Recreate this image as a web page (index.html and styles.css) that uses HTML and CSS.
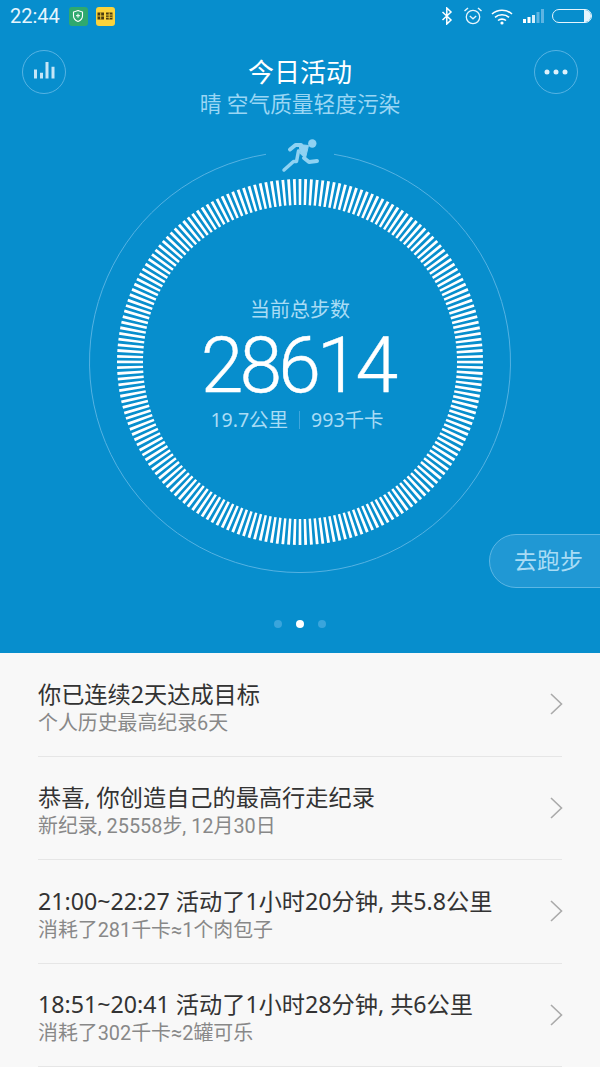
FILE: index.html
```html
<!DOCTYPE html>
<html lang="zh">
<head>
<meta charset="utf-8">
<title>今日活动</title>
<link rel="stylesheet" href="styles.css">
</head>
<body>
<main class="screen">
  <section class="hero">
    <div class="status">
      <div class="status-left">
        <span class="time">22:44</span>
        <span class="app-icon app-green">
          <svg viewBox="0 0 18 18" width="18" height="18"><path d="M9 3.500l4.500 1.600v3.600c0 2.800-1.900 4.700-4.500 5.800-2.600-1.100-4.500-3-4.500-5.800V5.100z" fill="none" stroke="#fff" stroke-width="1.100"/><path d="M9 6.700v4M7 8.700h4" stroke="#fff" stroke-width="1"/></svg>
        </span>
        <span class="app-icon app-yellow">
          <svg viewBox="0 0 18 18" width="18" height="18"><path d="M1.500 5.500h6.500v7H1.500zM10 5.500h6.500v7H10z" fill="#4a3a10"/><path d="M4.700 5.500v7M1.500 9h6.500M13.200 5.500v7M10 8h6.500M10 10.300h6.500" stroke="#f6d23c" stroke-width=".9"/></svg>
        </span>
      </div>
      <div class="status-right">
        <svg class="ic ic-bt" width="12" height="18" viewBox="0 0 12 18"><path d="M1.500 5l8.500 8-4.200 4V1l4.200 4-8.500 8" fill="none" stroke="#fff" stroke-width="1.500"/></svg>
        <svg class="ic ic-alarm" width="20" height="20" viewBox="0 0 20 20"><circle cx="10" cy="11" r="6.700" fill="none" stroke="#e8f5fc" stroke-width="1.300"/><path d="M6.800 10l3.200 2.800 3.200-2.800" fill="none" stroke="#e8f5fc" stroke-width="1.300"/><path d="M1.500 5l3.500-3M18.500 5L15 2" stroke="#e8f5fc" stroke-width="1.500"/></svg>
        <svg class="ic ic-wifi" width="22" height="17" viewBox="0 0 22 17"><path d="M1 6c5.500-5 14.500-5 20 0M4 9.300c3.800-3.400 10.200-3.400 14 0M7 12.500c2.200-1.900 5.800-1.900 8 0" fill="none" stroke="#fff" stroke-width="1.600"/><circle cx="11" cy="15" r="1.600" fill="#fff"/></svg>
        <svg class="ic ic-signal" width="22" height="16" viewBox="0 0 22 16"><path d="M1 11h3v4H1zM5.500 9h3v6h-3z" fill="#fff"/><path d="M10 7h3v8h-3z" fill="#d6eefa"/><path d="M14.500 4h3v11h-3zM19 1h3v14h-3z" fill="#5db4e2"/></svg>
        <span class="battery"><span class="battery-level"></span></span>
      </div>
    </div>

    <header class="top">
      <span class="round-btn">
        <svg width="24" height="20" viewBox="0 0 24 20"><path d="M3.500 7.500v9M9.500 10.700v5.800M15 0v16.500M21 4.700v11.800" stroke="#c5e6f7" stroke-width="3"/></svg>
      </span>
      <div class="heading">
        <h1>今日活动</h1>
        <p>晴 空气质量轻度污染</p>
      </div>
      <span class="round-btn">
        <svg width="24" height="6" viewBox="0 0 24 6"><circle cx="3" cy="3" r="2.500" fill="#dff1fb"/><circle cx="12" cy="3" r="2.500" fill="#dff1fb"/><circle cx="21" cy="3" r="2.500" fill="#dff1fb"/></svg>
      </span>
    </header>

    <div class="gauge">
      <svg class="gauge-art" width="440" height="448" viewBox="0 0 440 448">
        <path class="orbit" d="M186 16.300A210.500 210.500 0 1 0 254 16.300"/>
        <circle class="ticks" cx="220" cy="224" r="170" pathLength="200"/>
        <g class="runner" transform="translate(200 0)">
          <circle cx="32.300" cy="5.500" r="4.200"/>
          <path class="runner-body" d="M19 6.500L28.500 7.500 25.500 20 20.500 16z"/>
          <path class="runner-limb" d="M10 11.500L15.500 7H21M24 20l5 4 8-1"/>
          <path class="runner-leg" d="M18.500 13L16.500 23.500H13.500L4 32"/>
        </g>
      </svg>
      <div class="readout">
        <div class="readout-label">当前总步数</div>
        <div class="readout-value">28614</div>
        <div class="readout-meta"><span>19.7公里</span><i class="meta-rule"></i><span>993千卡</span></div>
      </div>
    </div>

    <div class="run-btn">去跑步</div>

    <div class="dots"><i class="dot"></i><i class="dot dot-on"></i><i class="dot"></i></div>
  </section>

  <ul class="list">
    <li class="row">
      <div class="row-text"><h2>你已连续2天达成目标</h2><p>个人历史最高纪录6天</p></div>
      <svg class="chev" width="13" height="22" viewBox="0 0 13 22"><path d="M1 1l10.500 10L1 21"/></svg>
    </li>
    <li class="row">
      <div class="row-text"><h2>恭喜, 你创造自己的最高行走纪录</h2><p>新纪录, 25558步, 12月30日</p></div>
      <svg class="chev" width="13" height="22" viewBox="0 0 13 22"><path d="M1 1l10.500 10L1 21"/></svg>
    </li>
    <li class="row">
      <div class="row-text"><h2>21:00~22:27 活动了1小时20分钟, 共5.8公里</h2><p>消耗了281千卡≈1个肉包子</p></div>
      <svg class="chev" width="13" height="22" viewBox="0 0 13 22"><path d="M1 1l10.500 10L1 21"/></svg>
    </li>
    <li class="row">
      <div class="row-text"><h2>18:51~20:41 活动了1小时28分钟, 共6公里</h2><p>消耗了302千卡≈2罐可乐</p></div>
      <svg class="chev" width="13" height="22" viewBox="0 0 13 22"><path d="M1 1l10.500 10L1 21"/></svg>
    </li>
  </ul>
</main>
</body>
</html>
```
FILE: styles.css
```css
* { box-sizing: border-box; }
html, body { margin: 0; padding: 0; }
body {
  width: 600px;
  height: 1067px;
  overflow: hidden;
  font-family: Roboto, "Noto Sans CJK SC", sans-serif;
  background: #f8f8f8;
}
.screen { display: flex; flex-direction: column; height: 1067px; }

.hero {
  position: relative;
  height: 653px;
  flex: none;
  background: #078ecd;
  display: flex;
  flex-direction: column;
}
.status {
  height: 36px;
  padding: 0 8px 4px 10px;
  display: flex;
  align-items: center;
  justify-content: space-between;
}
.status-left, .status-right { display: flex; align-items: center; }
.time { color: #e6f5fd; font-size: 20px; margin-right: 9px; }
.app-icon { width: 19px; height: 19px; border-radius: 3px; display: flex; align-items: center; justify-content: center; margin-right: 8px; }
.app-green { background: #2fa96e; }
.app-yellow { background: #fbd33c; }
.ic { display: block; }
.ic-alarm { margin-left: 10px; }
.ic-wifi { margin-left: 8px; }
.ic-signal { margin-left: 9px; }
.battery {
  width: 40px; height: 14px;
  margin-left: 8px;
  border: 1.500px solid #e6f5fd;
  border-radius: 8px;
  display: flex;
  justify-content: flex-end;
}
.battery-level { width: 7px; background: #e6f5fd; border-radius: 0 6px 6px 0; }

.top {
  height: 80px;
  padding: 14px 22px 0;
  display: flex;
  justify-content: space-between;
  align-items: flex-start;
}
.round-btn {
  width: 44px; height: 44px;
  border: 1px solid #56b3e3;
  border-radius: 50%;
  display: flex;
  align-items: center;
  justify-content: center;
}
.heading { text-align: center; }
.heading h1 { margin: 5px 0 0; font-size: 26px; line-height: 36px; font-weight: 400; color: #fff; }
.heading p { margin: -1px 0 0; font-size: 21.700px; line-height: 30px; color: #9ad6f4; }

.gauge {
  display: grid;
  justify-content: center;
  margin-top: 22px;
}
.gauge-art, .readout { grid-area: 1 / 1; }
.gauge-art { display: block; }
.orbit { fill: none; stroke: #55b2e2; stroke-width: 1; }
.ticks { fill: none; stroke: #fff; stroke-width: 26; stroke-dasharray: .5 .5; stroke-dashoffset: .25; }
.runner circle { fill: #8fd2f2; }
.runner-body { fill: #8fd2f2; stroke: #8fd2f2; stroke-width: 1; stroke-linejoin: round; }
.runner-limb { fill: none; stroke: #8fd2f2; stroke-width: 4; stroke-linejoin: round; stroke-linecap: round; }
.runner-leg { fill: none; stroke: #8fd2f2; stroke-width: 3.500; stroke-linejoin: round; stroke-linecap: round; }

.readout { align-self: start; justify-self: center; text-align: center; padding-top: 157px; }
.readout-label { font-size: 20px; line-height: 30px; color: #a9dcf5; }
.readout-value { font-size: 77px; line-height: 82px; margin-top: 0; padding-right: 5px; font-weight: 300; letter-spacing: -4px; -webkit-text-stroke: .4px #fff; color: #fff; }
.readout-meta { display: flex; align-items: center; justify-content: center; gap: 11px; padding-right: 6px; font-family: "Noto Sans", "Noto Sans CJK SC", sans-serif; font-size: 19.500px; line-height: 26px; margin-top: 0; color: #a9dcf5; }
.meta-rule { width: 1px; height: 18px; background: #3fa6dc; }

.run-btn {
  position: absolute;
  top: 534px;
  right: -30px;
  width: 141px; height: 54px;
  padding-left: 24px;
  border: 1px solid #5cb6e4;
  border-radius: 27px;
  background: #2098d4;
  color: #a9dcf5;
  font-size: 23px;
  line-height: 54px;
  white-space: nowrap;
}
.dots {
  position: absolute;
  left: 0; right: 0; top: 620px;
  display: flex;
  justify-content: center;
  gap: 14px;
}
.dot { width: 8px; height: 8px; border-radius: 50%; background: #3aa5dc; }
.dot-on { background: #fff; }

.list { list-style: none; margin: 0; padding: 0 38px; flex: 1; }
.row {
  height: 103.500px;
  display: flex;
  align-items: center;
  justify-content: space-between;
  border-bottom: 1px solid #e6e6e6;
}
.row h2 { margin: 0; font-family: "Noto Sans", "Noto Sans CJK SC", sans-serif; font-size: 23.200px; line-height: 32px; font-weight: 400; color: #333; white-space: nowrap; }
.row p { margin: 0; font-size: 19.900px; line-height: 27px; color: #888; }
.row-text { padding-top: 6px; }
.chev { display: block; margin-right: -1px; }
.chev path { fill: none; stroke: #aaa; stroke-width: 1.600; }
```
